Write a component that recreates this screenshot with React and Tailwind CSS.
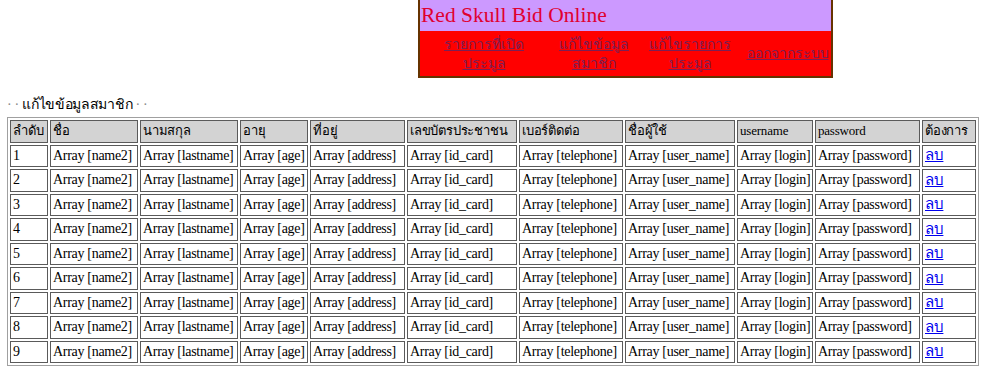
import React from "react";

const columns = [
  { label: "ลำดับ", w: "w-[38px]" },
  { label: "ชื่อ", w: "w-[88px]" },
  { label: "นามสกุล", w: "w-[98px]" },
  { label: "อายุ", w: "w-[68px]" },
  { label: "ที่อยู่", w: "w-[95px]" },
  { label: "เลขบัตรประชาชน", w: "w-[110px]" },
  { label: "เบอร์ติดต่อ", w: "w-[104px]" },
  { label: "ชื่อผู้ใช้", w: "w-[110px]" },
  { label: "username", w: "w-[76px]" },
  { label: "password", w: "w-[105px]" },
  { label: "ต้องการ", w: "w-[54px]" },
];

const fields = [
  "Array [name2]",
  "Array [lastname]",
  "Array [age]",
  "Array [address]",
  "Array [id_card]",
  "Array [telephone]",
  "Array [user_name]",
  "Array [login]",
  "Array [password]",
];

const navLinks = [
  { lines: ["รายการที่เปิด", "ประมูล"], w: "w-[128px]" },
  { lines: ["แก้ไขข้อมูล", "สมาชิก"], w: "w-[92px]" },
  { lines: ["แก้ไขรายการ", "ประมูล"], w: "w-[100px]" },
  { lines: ["ออกจากระบบ"], w: "w-[95px]" },
];

const cell =
  "h-[22.5px] border border-[#5a5a5a] px-[2px] py-0 text-left align-middle leading-[18px] whitespace-nowrap overflow-hidden";

const App = () => {
  return (
    <div className="min-h-[381px] bg-white font-['Liberation_Serif',serif] text-[14px] tracking-[-0.3px] text-black">
      <div className="ml-[418px] w-[415px] border-2 border-t-0 border-[#663300]">
        <div className="h-[31px] bg-[#cc99ff] pl-[1px] text-[21.5px] leading-[31px] tracking-normal text-[#e00030]">
          Red Skull Bid Online
        </div>
        <div className="flex h-[45px] items-center bg-[#ff0000] text-[14px] tracking-normal">
          {navLinks.map((n, i) => (
            <div key={i} className={`${n.w} shrink-0 text-center leading-[19px]`}>
              <a href="#" className="text-[#7a1f55] underline">
                {n.lines.map((l, j) => (
                  <div key={j}>{l}</div>
                ))}
              </a>
            </div>
          ))}
        </div>
      </div>

      <div className="mt-[17px] ml-[7px] text-[14px] leading-[20px]">
        <span className="text-[#888]">· · </span>แก้ไขข้อมูลสมาชิก
        <span className="text-[#888]"> · ·</span>
      </div>

      <table className="mt-[2px] ml-[7px] w-[970px] table-fixed border-separate border-spacing-[2px] border border-[#a0a0a0]">
        <thead>
          <tr>
            {columns.map((c) => (
              <th
                key={c.label}
                className={`${cell} ${c.w} bg-[#d3d3d3] text-[13px] font-normal tracking-[-0.2px]`}
              >
                {c.label}
              </th>
            ))}
          </tr>
        </thead>
        <tbody>
          {Array.from({ length: 9 }, (_, r) => (
            <tr key={r}>
              <td className={cell}>{r + 1}</td>
              {fields.map((f) => (
                <td key={f} className={cell}>
                  {f}
                </td>
              ))}
              <td className={cell}>
                <a href="#" className="text-[15px] text-[#0000ee] underline">
                  ลบ
                </a>
              </td>
            </tr>
          ))}
        </tbody>
      </table>
    </div>
  );
};

export default App;
